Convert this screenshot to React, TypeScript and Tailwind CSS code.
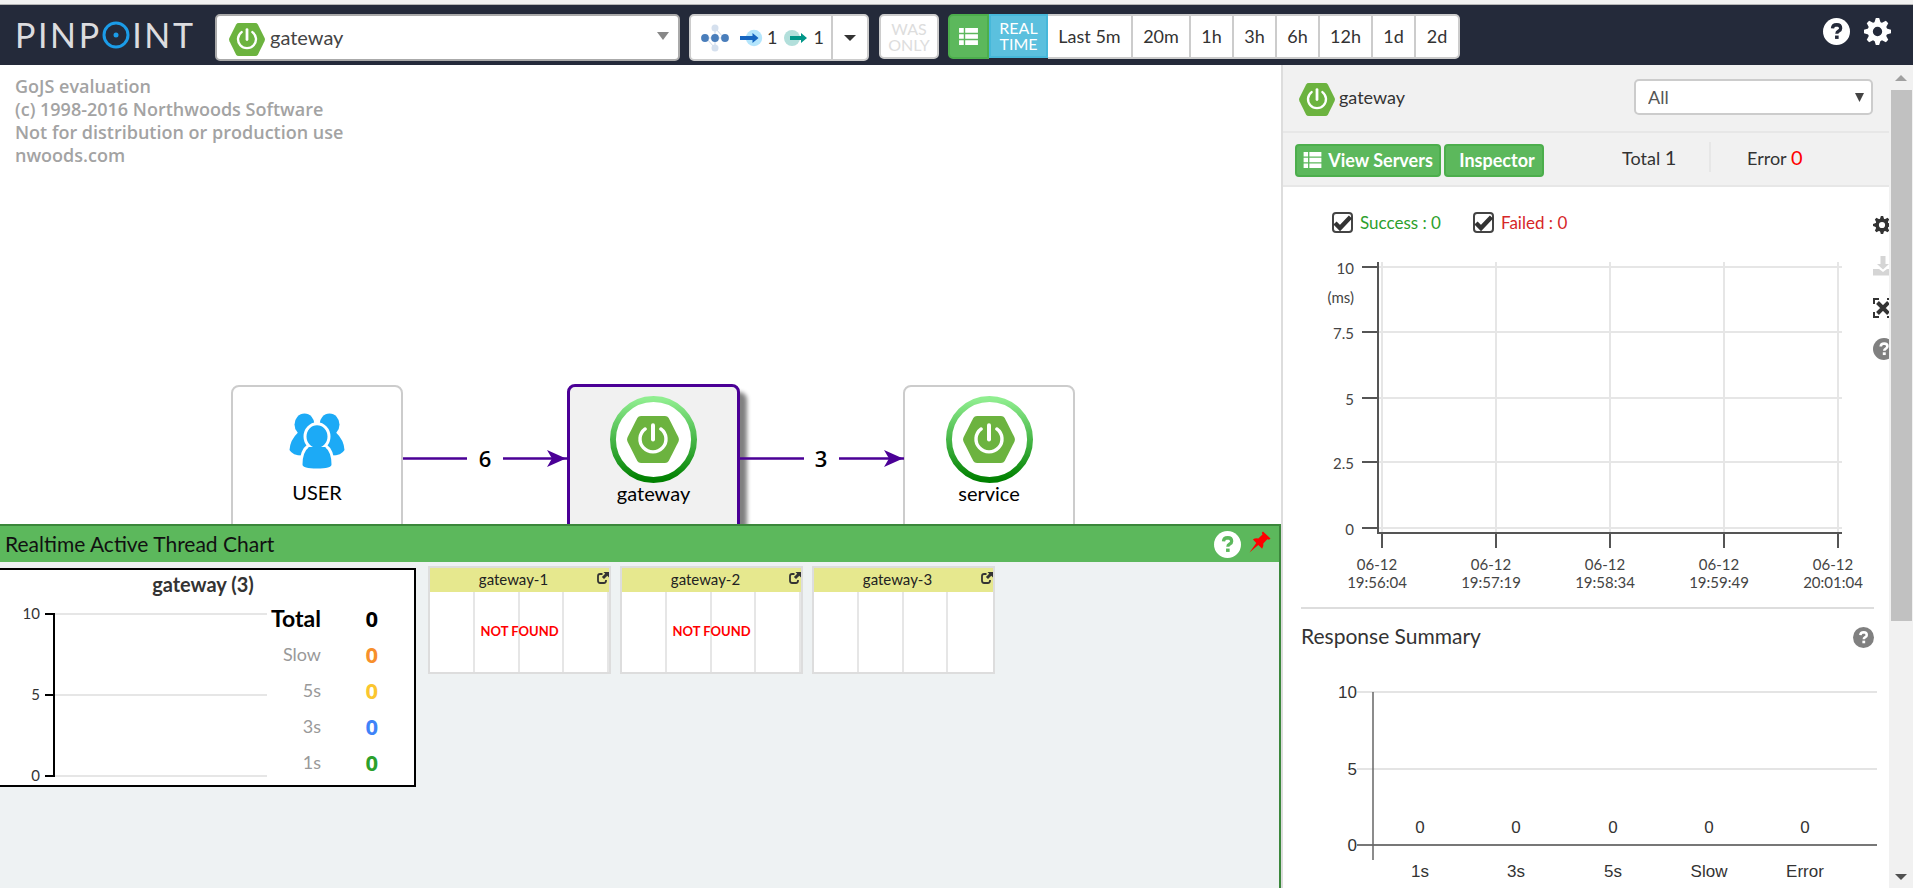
import type { ReactNode } from 'react';

function HexIcon({ className }: { className: string }) {
  return (
    <svg viewBox="0 0 52 48" preserveAspectRatio="none" className={className} aria-hidden="true">
      <path
        d="M14 0h24q2.500 0 3.700 2L51.300 21.500q1.200 2.500 0 5L41.700 46q-1.200 2-3.700 2H14q-2.500 0-3.700-2L.7 26.500q-1.200-2.500 0-5L10.300 2Q11.500 0 14 0z"
        fill="#6cb33f"
      />
      <path d="M18.200 13.200a13 13 0 1 0 15.600 0" fill="none" stroke="#fff" strokeWidth="3.400" strokeLinecap="round" />
      <path d="M26 9.500v14.500" stroke="#fff" strokeWidth="4" strokeLinecap="round" />
    </svg>
  );
}

function HelpIcon({ className, mark }: { className: string; mark: string }) {
  return (
    <svg viewBox="0 0 24 24" className={className} aria-hidden="true">
      <circle cx="12" cy="12" r="12" fill="currentColor" />
      <path d="M8.400 9.300q.2-3.300 3.800-3.300 3.500.1 3.500 3 0 1.700-1.700 2.600-1.700.9-1.700 2.400" fill="none" stroke={mark} strokeWidth="2.900" />
      <rect x="10.700" y="15.600" width="3.200" height="3" fill={mark} />
    </svg>
  );
}

function GearIcon({ className }: { className: string }) {
  const teeth = [0, 45, 90, 135, 180, 225, 270, 315];
  return (
    <svg viewBox="0 0 26 26" className={className} aria-hidden="true">
      <circle cx="13" cy="13" r="7" fill="none" stroke="currentColor" strokeWidth="5" />
      {teeth.map((a) => (
        <path key={a} d="M9.800 5L11.400 0h3.200l1.600 5z" fill="currentColor" transform={`rotate(${a} 13 13)`} />
      ))}
    </svg>
  );
}

function ListIcon({ className }: { className: string }) {
  return (
    <svg viewBox="0 0 20 18" className={className} fill="currentColor" aria-hidden="true">
      <path d="M0 0h5v5H0zM6.500 0H20v5H6.500zM0 6.500h5v5H0zM6.500 6.500H20v5H6.500zM0 13h5v5H0zM6.500 13H20v5H6.500z" />
    </svg>
  );
}

function ShareIcon() {
  return (
    <svg viewBox="0 0 12 12" className="size-3" aria-hidden="true">
      <path d="M5.500 2H3.200Q1 2 1 4.200v4.600Q1 11 3.200 11h3.600Q9 11 9 8.800V8" fill="none" stroke="#333" strokeWidth="1.800" />
      <path d="M6.500 0H12v5.500L10.300 3.800 7 7.100 4.900 5 8.200 1.700z" fill="#333" />
    </svg>
  );
}

const ranges = [
  { label: 'Last 5m', w: 'w-[85px]' },
  { label: '20m', w: 'w-[58px]' },
  { label: '1h', w: 'w-[43px]' },
  { label: '3h', w: 'w-[43px]' },
  { label: '6h', w: 'w-[43px]' },
  { label: '12h', w: 'w-[53px]' },
  { label: '1d', w: 'w-[43px]' },
  { label: '2d', w: 'w-[44px]' },
];

function Header() {
  return (
    <header className="flex h-[65px] shrink-0 items-start border-t-4 border-[#f1f1f1] bg-[#242a3a] pt-[10px] shadow-[inset_0_1px_0_#b5b5b5]">
      <div className="mt-[6px] ml-[15px] flex h-[30px] w-[178px] items-center justify-between text-[34px] leading-[30px] text-[#dcdcdf]" aria-label="PINPOINT">
        <span>P</span><span>I</span><span>N</span><span>P</span>
        <svg viewBox="0 0 28 28" className="size-7" aria-hidden="true">
          <circle cx="14" cy="14" r="12" fill="none" stroke="#1b9ce8" strokeWidth="3" />
          <circle cx="14" cy="14" r="2.500" fill="#1b9ce8" />
        </svg>
        <span>I</span><span>N</span><span>T</span>
      </div>

      <div className="relative ml-[22px] h-[47px] w-[465px]">
        <select aria-label="Application" className="size-full appearance-none rounded-[5px] border-2 border-[#aaa] bg-white pb-[2px] pl-[53px] text-[20px] text-[#444]">
          <option>gateway</option>
        </select>
        <HexIcon className="pointer-events-none absolute top-[9px] left-[14px] h-[33px] w-9" />
        <svg viewBox="0 0 12 8" className="pointer-events-none absolute top-[18px] right-[11px] h-2 w-3" aria-hidden="true">
          <path d="M0 0h12L6 8z" fill="#888" />
        </svg>
      </div>

      <div className="ml-[9px] flex h-[47px] w-[180px] rounded-[5px] border-2 border-[#ccc] bg-white text-[18px] text-[#333]">
        <button type="button" className="flex flex-1 items-center pl-[10px]">
          <svg viewBox="0 0 28 28" className="size-7" aria-hidden="true">
            <path d="M5 14h18M14 4v20M14 4l9 10M5 14l9 10" stroke="#cbd7e8" fill="none" />
            <circle cx="14" cy="4" r="3.500" fill="#d5e0ee" />
            <circle cx="14" cy="24" r="3.500" fill="#d5e0ee" />
            <circle cx="4" cy="14" r="3.900" fill="#4a7ebb" />
            <circle cx="14" cy="14" r="3.900" fill="#4a7ebb" />
            <circle cx="24" cy="14" r="3.900" fill="#4a7ebb" />
          </svg>
          <svg viewBox="0 0 24 26" className="ml-[11px] h-[26px] w-6" aria-hidden="true">
            <circle cx="14" cy="13" r="8.200" fill="#b3e5fc" />
            <path d="M0 11h12.500V8l6 5-6 5v-3H0z" fill="#1565c0" />
          </svg>
          <span className="ml-[3px]">1</span>
          <svg viewBox="0 0 24 26" className="ml-[7px] h-[26px] w-6" aria-hidden="true">
            <circle cx="8" cy="13" r="8" fill="#b2dfdb" />
            <path d="M6 11h11V8l6 5-6 5v-3H6z" fill="#009688" />
          </svg>
          <span className="ml-[5px]">1</span>
        </button>
        <button type="button" aria-label="Depth options" className="flex w-9 items-center justify-center border-l-2 border-[#ccc]">
          <svg viewBox="0 0 12 6" className="h-[6px] w-3" aria-hidden="true"><path d="M0 0h12L6 6z" fill="#333" /></svg>
        </button>
      </div>

      <button type="button" className="ml-[10px] h-[45px] w-[60px] rounded-[5px] border-2 border-[#ccc] bg-white text-[16px] leading-4 text-[#ddd]">
        WAS<br />ONLY
      </button>

      <div className="ml-[9px] flex h-[45px] text-[18px] text-[#333]">
        <button type="button" aria-label="Server list" className="flex w-[41px] items-center justify-center rounded-l-[5px] border-2 border-[#4cae4c] bg-[#5cb85c] text-white">
          <ListIcon className="h-[17px] w-[19px]" />
        </button>
        <button type="button" className="h-11 w-[59px] border-2 border-[#46b8da] bg-[#5bc0de] text-[16px] leading-4 text-white">
          REAL<br />TIME
        </button>
        {ranges.map((r) => (
          <button key={r.label} type="button" className={`${r.w} border-y-2 border-r-2 border-[#ccc] bg-white last:rounded-r-[5px]`}>
            {r.label}
          </button>
        ))}
      </div>

      <div className="mt-1 mr-[22px] ml-auto flex gap-[14px] text-white">
        <button type="button" aria-label="Help"><HelpIcon className="size-[27px]" mark="#242a3a" /></button>
        <button type="button" aria-label="Settings"><GearIcon className="size-[27px]" /></button>
      </div>
    </header>
  );
}

function MapNode({ className, label, children }: { className: string; label: string; children: ReactNode }) {
  return (
    <div className={`absolute h-[172px] rounded-[8px] text-center text-[20px] leading-5 text-black ${className}`}>
      {children}
      <div>{label}</div>
    </div>
  );
}

function RingIcon({ id }: { id: string }) {
  return (
    <div className="relative mx-auto size-[87px]">
      <svg viewBox="0 0 88 88" className="size-full" aria-hidden="true">
        <defs>
          <linearGradient id={id} x1="0" y1="0" x2="0" y2="1">
            <stop offset="0" stopColor="#90ee90" />
            <stop offset="1" stopColor="#008000" />
          </linearGradient>
        </defs>
        <circle cx="44" cy="44" r="41" fill="#fff" stroke={`url(#${id})`} strokeWidth="6" />
      </svg>
      <HexIcon className="absolute top-5 left-[17px] h-[47px] w-[52px]" />
    </div>
  );
}

function ServerMap() {
  return (
    <section aria-label="Server map" className="relative min-h-0 flex-1 overflow-hidden bg-white">
      <p className="pt-[10px] pl-[15px] font-['Open_Sans',sans-serif] text-[18px] leading-[23px] font-semibold text-[#a3a3a3]">
        GoJS evaluation<br />
        (c) 1998-2016 Northwoods Software<br />
        Not for distribution or production use<br />
        nwoods.com
      </p>
      <MapNode className="top-[320px] left-[231px] w-[172px] border-2 border-[#ccc] bg-white" label="USER">
        <svg viewBox="0 0 56 56" className="mx-auto mt-[26px] mb-[13px] size-14" fill="#1caaf6" aria-hidden="true">
          <ellipse cx="15.500" cy="11.500" rx="10" ry="11" />
          <ellipse cx="40.500" cy="11.500" rx="10" ry="11" />
          <path d="M9.500 19Q1 27 .5 37q3 5.500 13 5.500h29q10 0 13-5.500Q55 27 46.500 19L28 28z" />
          <g stroke="#fff" strokeWidth="3">
            <path d="M19.500 32.500Q12 38 12 51.500q0 5.500 16 5.500t16-5.500Q44 38 36.500 32.500z" />
            <ellipse cx="28" cy="23.500" rx="12" ry="12.800" />
          </g>
          <path d="M19.500 34h17v4h-17z" />
        </svg>
      </MapNode>
      <MapNode className="top-[319px] left-[567px] w-[173px] border-[3px] border-[#4b0096] bg-[#f1f1f1] shadow-[7px_8px_4px_#808080]" label="gateway">
        <div className="pt-[9px]"><RingIcon id="ringGateway" /></div>
      </MapNode>
      <MapNode className="top-[320px] left-[903px] w-[172px] border-2 border-[#ccc] bg-white" label="service">
        <div className="pt-[9px]"><RingIcon id="ringService" /></div>
      </MapNode>
      <svg width="520" height="40" className="absolute top-[373px] left-[400px]" aria-hidden="true">
        <path d="M3 20.500h64M103 20.500h64M340 20.500h64M439 20.500h65" stroke="#4b0096" strokeWidth="2.600" />
        <path d="M147 12l19 8.500-19 8.500 5-8.500zM484 12l19 8.500-19 8.500 5-8.500z" fill="#4b0096" />
        <g fontFamily="Open Sans, sans-serif" fontSize="22" fontWeight="600" textAnchor="middle">
          <text x="85" y="29">6</text>
          <text x="421" y="29">3</text>
        </g>
      </svg>
    </section>
  );
}

const totals = [
  { label: 'Slow', color: 'text-[#f78f2c]' },
  { label: '5s', color: 'text-[#fbc62f]' },
  { label: '3s', color: 'text-[#3f83f8]' },
  { label: '1s', color: 'text-[#2ca02c]' },
];

const agents = [
  { name: 'gateway-1', missing: true },
  { name: 'gateway-2', missing: true },
  { name: 'gateway-3', missing: false },
];

function RealtimePanel() {
  return (
    <section aria-label="Realtime" className="h-[364px] shrink-0 border-t-2 border-r-2 border-[#3b873b] bg-[#eef2f3]">
      <div className="flex h-9 items-center bg-[#5cb85c] pr-2 pl-[5px]">
        <h2 className="text-[21px] text-[#111]">Realtime Active Thread Chart</h2>
        <button type="button" aria-label="Help" className="ml-auto text-white"><HelpIcon className="size-[27px]" mark="#5cb85c" /></button>
        <button type="button" aria-label="Pin" className="mb-1 ml-2">
          <svg viewBox="0 0 22 22" className="size-[22px]" aria-hidden="true">
            <path d="M14 .5l7.500 7-1.500 1.300-1.700-.6-4 4.300q.6 3-1.200 5.200L9.300 14 .5 21.500 7.300 12 3.900 8.600Q6.300 6.800 9.300 7.600l4.200-4.200-.7-1.700z" fill="#f00" />
          </svg>
        </button>
      </div>
      <div className="flex items-start pt-1">
        <div className="mt-[2px] h-[219px] w-[416px] border-y-2 border-r-2 border-black bg-white">
          <h3 className="h-[30px] pr-2 text-center text-[20px] leading-7 font-bold text-[#333]">gateway (3)</h3>
          <div className="flex">
            <svg width="267" height="184" aria-hidden="true">
              <path d="M55 14h212M55 95h212M55 176h212" stroke="#e6e6e6" strokeWidth="2" />
              <path d="M45 14h9v162h-9M45 95h9" stroke="#000" strokeWidth="2" fill="none" />
              <g fontFamily="Lato, sans-serif" fontSize="15" fill="#333" textAnchor="end">
                <text x="40" y="19">10</text>
                <text x="40" y="100">5</text>
                <text x="40" y="181">0</text>
              </g>
            </svg>
            <table className="h-[180px] text-right leading-9">
              <tbody>
                <tr className="h-9 text-[22px] font-bold text-black">
                  <th scope="row" className="w-[54px] text-[23px] font-bold">Total</th>
                  <td className="w-[57px] font-['Open_Sans',sans-serif]">0</td>
                </tr>
                {totals.map((t) => (
                  <tr key={t.label} className="h-9">
                    <th scope="row" className="text-right text-[18px] font-normal text-[#999]">{t.label}</th>
                    <td className={`font-['Open_Sans',sans-serif] text-[22px] font-bold ${t.color}`}>0</td>
                  </tr>
                ))}
              </tbody>
            </table>
          </div>
        </div>
        <div className="ml-3 flex flex-wrap gap-[9px]">
          {agents.map((a) => (
            <div key={a.name} className="h-[108px] w-[183px] border-2 border-[#ddd] bg-white">
              <div className="flex h-6 items-center bg-[#e6e88e] text-[15px] leading-6 text-[#222]">
                <span className="flex-1 pb-[2px] text-center">{a.name}</span>
                <a href="#agent" aria-label={`Open ${a.name}`} className="mb-1"><ShareIcon /></a>
              </div>
              <div className="relative grid h-20 grid-cols-4 divide-x-2 divide-[#e6e6e6]">
                <span /><span /><span /><span />
                {a.missing && (
                  <strong className="absolute inset-0 flex items-center justify-center text-[13px] font-bold text-[#f00]">NOT FOUND</strong>
                )}
              </div>
            </div>
          ))}
        </div>
      </div>
    </section>
  );
}

const yTicks = [
  { y: 17, label: '10' },
  { y: 82, label: '7.5' },
  { y: 148, label: '5' },
  { y: 212, label: '2.5' },
  { y: 278, label: '0' },
];
const xTicks = [
  { x: 99, label: '19:56:04' },
  { x: 213, label: '19:57:19' },
  { x: 327, label: '19:58:34' },
  { x: 441, label: '19:59:49' },
  { x: 555, label: '20:01:04' },
];

function ScatterChart() {
  return (
    <svg width="580" height="357" className="block" aria-label="Response time scatter">
      <g stroke="#e6e6e6" strokeWidth="2">
        {yTicks.map((t) => <path key={t.y} d={`M95 ${t.y}h464`} />)}
        {xTicks.map((t) => <path key={t.x} d={`M${t.x} 12v271`} />)}
      </g>
      <g stroke="#555" strokeWidth="2">
        <path d="M95 12v271h464" fill="none" />
        {yTicks.map((t) => <path key={t.y} d={`M79 ${t.y}h16`} />)}
        {xTicks.map((t) => <path key={t.x} d={`M${t.x} 283v15`} />)}
      </g>
      <g fontFamily="Lato, sans-serif" fontSize="15" fill="#444">
        <g textAnchor="end">
          {yTicks.map((t) => <text key={t.y} x="71" y={t.y + 7}>{t.label}</text>)}
          <text x="71" y="53">(ms)</text>
        </g>
        <g textAnchor="middle">
          {xTicks.map((t) => (
            <text key={t.x} x={t.x - 5} y="320">
              06-12
              <tspan x={t.x - 5} dy="18">{t.label}</tspan>
            </text>
          ))}
        </g>
      </g>
    </svg>
  );
}

const bars = [
  { x: 137, label: '1s' },
  { x: 233, label: '3s' },
  { x: 330, label: '5s' },
  { x: 426, label: 'Slow' },
  { x: 522, label: 'Error' },
];

function SummaryChart() {
  return (
    <svg width="600" height="240" className="block" aria-label="Response summary">
      <path d="M74 42h520M74 119h520" stroke="#e4e4e4" strokeWidth="2" />
      <path d="M74 195h520" stroke="#777" strokeWidth="2" />
      <path d="M90 42v168" stroke="#666" strokeWidth="1.500" />
      <g fontFamily="Liberation Sans, sans-serif" fontSize="17" fill="#333">
        <g textAnchor="end">
          <text x="74" y="48">10</text>
          <text x="74" y="125">5</text>
          <text x="74" y="201">0</text>
        </g>
        <g textAnchor="middle">
          {bars.map((b) => (
            <g key={b.label}>
              <text x={b.x} y="183">0</text>
              <text x={b.x} y="227">{b.label}</text>
            </g>
          ))}
        </g>
      </g>
    </svg>
  );
}

function Check({ label, className }: { label: string; className: string }) {
  return (
    <label className={`flex items-center gap-[7px] ${className}`}>
      <span className="relative block size-[21px]">
        <input type="checkbox" defaultChecked className="peer block size-full appearance-none rounded-[4px] border-2 border-[#444] bg-white" />
        <svg viewBox="0 0 21 21" className="pointer-events-none absolute inset-0 hidden size-full peer-checked:block" aria-hidden="true">
          <path d="M3 11l5 5L18.500 5" fill="none" stroke="#333" strokeWidth="4.500" />
        </svg>
      </span>
      {label}
    </label>
  );
}

function DetailPanel() {
  return (
    <aside className="flex w-[632px] shrink-0 border-l-2 border-[#ddd] bg-white text-[18px] text-[#333]">
      <div className="min-w-0 flex-1 overflow-hidden">
        <div className="flex h-[68px] items-center border-b-2 border-[#e7e7e7] bg-[#f1f1f1] pt-[2px] pr-4 pl-4">
          <HexIcon className="h-[33px] w-9" />
          <span className="mb-1 ml-1">gateway</span>
          <div className="relative mb-1 ml-auto h-9 w-[239px]">
            <select aria-label="Agent" className="size-full appearance-none rounded-[5px] border-2 border-[#ccc] bg-white pl-3 text-[18px] text-[#555]">
              <option>All</option>
            </select>
            <svg viewBox="0 0 9 9" className="pointer-events-none absolute top-[14px] right-[9px] size-[9px]" aria-hidden="true">
              <path d="M0 0h9L4.500 9z" fill="#444" />
            </svg>
          </div>
        </div>
        <div className="flex h-[54px] items-center border-b-2 border-[#e7e7e7] bg-[#f1f1f1] pl-3">
          <button type="button" className="mt-[2px] flex h-[33px] w-[146px] items-center justify-center gap-[6px] rounded-[4px] border-2 border-[#4cae4c] bg-[#5cb85c] font-bold text-white">
            <ListIcon className="h-4 w-[19px]" />View Servers
          </button>
          <button type="button" className="mt-[2px] ml-[3px] h-[33px] w-[100px] rounded-[4px] border-2 border-[#4cae4c] bg-[#5cb85c] pl-[6px] font-bold text-white">Inspector</button>
          <div className="mb-1 ml-[78px] w-[87px]">Total <span className="text-[20px]">1</span></div>
          <div className="mb-1 h-[30px] border-l-2 border-[#e7e7e7] pl-9">Error <span className="text-[20px] text-[#f00]">0</span></div>
        </div>
        <div className="flex">
          <div className="w-[580px] shrink-0">
            <div className="flex h-[63px] items-center gap-[30px] pt-2 pl-[49px] text-[18px]">
              <Check label="Success : 0" className="w-[111px] text-[17px] text-[#2ca02c]" />
              <Check label="Failed : 0" className="text-[17px] text-[#d62728]" />
            </div>
            <ScatterChart />
          </div>
          <div className="flex w-[26px] shrink-0 flex-col items-start overflow-hidden pt-[29px] pl-[10px] text-[#333]">
            <button type="button" aria-label="Chart settings"><GearIcon className="size-[18px] max-w-none" /></button>
            <button type="button" aria-label="Download" className="mt-[22px] text-[#d5d5d5]">
              <svg viewBox="0 0 20 20" className="size-5 max-w-none" fill="currentColor" aria-hidden="true">
                <path d="M7.500 0h5v8H16l-6 5.500L4 8h3.500zM0 13h6l4 3 4-3h6v6.500H0z" />
              </svg>
            </button>
            <button type="button" aria-label="Full screen" className="mt-[22px]">
              <svg viewBox="0 0 20 20" className="size-5 max-w-none" aria-hidden="true">
                <path d="M1 6V1h5M14 1h5v5M19 14v5h-5M6 19H1v-5" fill="none" stroke="currentColor" strokeWidth="2" />
                <path d="M4.500 4.500l11 11M15.500 4.500l-11 11" stroke="currentColor" strokeWidth="4" />
              </svg>
            </button>
            <button type="button" aria-label="Help" className="mt-[20px] text-[#808080]"><HelpIcon className="size-[22px] max-w-none" mark="#fff" /></button>
          </div>
        </div>
        <div className="mr-[15px] ml-[18px] flex h-[43px] items-center justify-between border-t-2 border-[#ddd] pt-4">
          <h2 className="pb-1 text-[21px]">Response Summary</h2>
          <button type="button" aria-label="Help" className="text-[#808080]"><HelpIcon className="size-[21px]" mark="#fff" /></button>
        </div>
        <SummaryChart />
      </div>
      <div className="flex w-6 shrink-0 flex-col items-center bg-[#f1f1f1] pt-[10px] pb-2" aria-hidden="true">
        <svg viewBox="0 0 12 6" className="h-[6px] w-3"><path d="M0 6h12L6 0z" fill="#a0a0a0" /></svg>
        <div className="mt-[9px] h-[531px] w-[21px] bg-[#c1c1c1]" />
        <svg viewBox="0 0 12 6" className="mt-auto h-[6px] w-3"><path d="M0 0h12L6 6z" fill="#505050" /></svg>
      </div>
    </aside>
  );
}

export default function App() {
  return (
    <div className="flex h-screen flex-col overflow-hidden bg-white font-['Lato',sans-serif]">
      <Header />
      <div className="flex min-h-0 flex-1">
        <main className="flex min-w-0 flex-1 flex-col">
          <ServerMap />
          <RealtimePanel />
        </main>
        <DetailPanel />
      </div>
    </div>
  );
}
